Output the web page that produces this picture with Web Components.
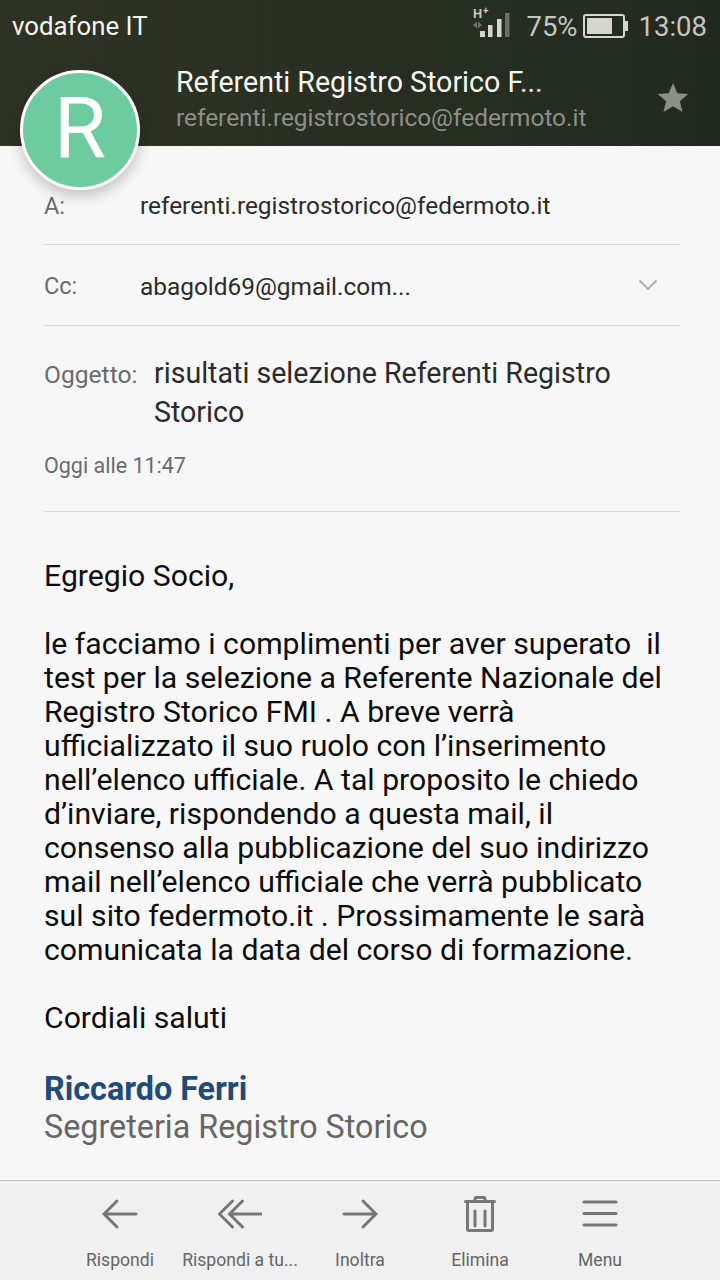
<!DOCTYPE html>
<html lang="it">
<head>
<meta charset="utf-8">
<title>Email</title>
<style>
  html, body { margin: 0; padding: 0; }
  body {
    width: 720px;
    height: 1280px;
    overflow: hidden;
    background: #f7f7f7;
    font-family: Roboto, "Liberation Sans", sans-serif;
    display: flex;
    flex-direction: column;
  }
  mail-action svg.tall { height: 36px; }
</style>
</head>
<body>
<mail-header>
  <span slot="carrier">vodafone IT</span>
  <span slot="title">Referenti Registro Storico F...</span>
  <span slot="address">referenti.registrostorico@federmoto.it</span>
</mail-header>

<mail-details>
  <mail-recipient label="A:">referenti.registrostorico@federmoto.it</mail-recipient>
  <mail-recipient label="Cc:" expandable>abagold69@gmail.com...</mail-recipient>
  <mail-subject date="Oggi alle 11:47">risultati selezione Referenti Registro Storico</mail-subject>
</mail-details>

<mail-body>
  <p>Egregio Socio,</p>
  <p>le facciamo i complimenti per aver superato&nbsp; il<br>test per la selezione a Referente Nazionale del<br>Registro Storico FMI . A breve verrà<br>ufficializzato il suo ruolo con l’inserimento<br>nell’elenco ufficiale. A tal proposito le chiedo<br>d’inviare, rispondendo a questa mail, il<br>consenso alla pubblicazione del suo indirizzo<br>mail nell’elenco ufficiale che verrà pubblicato<br>sul sito federmoto.it . Prossimamente le sarà<br>comunicata la data del corso di formazione.</p>
  <p>Cordiali saluti</p>
  <mail-signature name="Riccardo Ferri">Segreteria Registro Storico</mail-signature>
</mail-body>

<mail-toolbar>
  <mail-action label="Rispondi">
    <svg viewBox="0 0 36 32"><path d="M34 16H2M15 3 2 16l13 13"/></svg>
  </mail-action>
  <mail-action label="Rispondi a tu...">
    <svg viewBox="0 0 44 32"><path d="M43 16H11.500M24.500 3 11.500 16l13 13M14.500 3 1.500 16l13 13"/></svg>
  </mail-action>
  <mail-action label="Inoltra">
    <svg viewBox="0 0 36 32"><path d="M2 16h32M21 3l13 13-13 13"/></svg>
  </mail-action>
  <mail-action label="Elimina">
    <svg class="tall" viewBox="0 0 36 36"><path d="M3.500 5.500h29M5.500 6v27A1.500 1.500 0 0 0 7 34.500h22a1.500 1.500 0 0 0 1.500-1.500V6M13 5V2.500a1 1 0 0 1 1-1h8a1 1 0 0 1 1 1V5M13 15v15M23 15v15"/></svg>
  </mail-action>
  <mail-action label="Menu">
    <svg viewBox="0 0 36 32"><path d="M2 4h32M2 15.500h32M2 27h32"/></svg>
  </mail-action>
</mail-toolbar>

<script>
class MailHeader extends HTMLElement {
  constructor() {
    super();
    this.attachShadow({ mode: "open" });
  }

  connectedCallback() {
    this.shadowRoot.innerHTML = /* html */ `
      <style>
        :host {
          display: block;
          position: relative;
          height: 146px;
          flex: none;
          background: linear-gradient(90deg, #2e3324, #222a20);
          color: #fff;
          z-index: 2;
        }
        .status {
          height: 52px;
          padding: 0 13px 0 12px;
          display: flex;
          align-items: center;
          font-size: 25.800px;
          color: #f4f4f0;
        }
        .status .carrier { flex: 1; }
        .status .right {
          display: flex;
          align-items: center;
          color: #c4c7bf;
          font-size: 27.500px;
        }
        .signal { width: 38px; height: 36px; margin-right: 15px; margin-top: -12px; }
        .battery { width: 46px; height: 24px; margin: 0 10px 0 5px; }
        .info {
          display: flex;
          align-items: flex-start;
          padding-left: 176px;
          padding-right: 30px;
        }
        .names { flex: 1; }
        .title { font-size: 28.600px; line-height: 32px; margin-top: 14px; color: #f6f6f2; }
        .address { font-size: 24.400px; line-height: 32px; margin-top: 4px; color: #8c9087; }
        .star { width: 32px; height: 30px; margin-top: 30px; margin-right: 1px; }
        .avatar {
          position: absolute;
          left: 20px;
          top: 70px;
          width: 120px;
          height: 120px;
          box-sizing: border-box;
          border: 3px solid #fff;
          border-radius: 50%;
          background: #6ccb9f;
          box-shadow: 0 6px 14px rgba(0, 0, 0, .22);
          display: flex;
          align-items: center;
          justify-content: center;
          padding-bottom: 3px;
          font-size: 85px;
          color: #fff;
        }
      </style>
      <div class="status">
        <div class="carrier"><slot name="carrier"></slot></div>
        <div class="right">
          <svg class="signal" viewBox="0 -6 38 36">
            <text x="0" y="10" font-size="13" font-weight="700" font-family="Roboto" fill="#c4c7bf">H</text>
            <text x="10" y="6" font-size="10" font-weight="700" font-family="Roboto" fill="#c4c7bf">+</text>
            <path d="M0 17l4-3.500v7zM5 13.500l4 3.500-4 3.500z" fill="#6f7368"/>
            <rect x="7" y="23" width="5" height="6" fill="#d4d6cf"/>
            <rect x="15" y="17" width="4.500" height="12" fill="#d4d6cf"/>
            <rect x="24" y="11" width="4.500" height="18" fill="#d4d6cf"/>
            <rect x="32" y="5" width="4.500" height="24" fill="#6c7066"/>
          </svg>
          <span>75%</span>
          <svg class="battery" viewBox="0 0 46 24">
            <rect x="1" y="1" width="40" height="22" rx="2" fill="none" stroke="#d4d6cf" stroke-width="2"/>
            <rect x="4" y="4" width="25" height="16" fill="#d4d6cf"/>
            <rect x="42" y="7" width="3" height="10" fill="#d4d6cf"/>
          </svg>
          <span>13:08</span>
        </div>
      </div>
      <div class="info">
        <div class="names">
          <div class="title"><slot name="title"></slot></div>
          <div class="address"><slot name="address"></slot></div>
        </div>
        <svg class="star" viewBox="0 0 32 30"><path d="M16 1l4.300 10.200 11 .9-8.400 7.200 2.600 10.700L16 24.300 6.500 30l2.600-10.700L.7 12.100l11-.9z" fill="#8b9086"/></svg>
      </div>
      <div class="avatar">R</div>
    `;
  }
}

class MailDetails extends HTMLElement {
  constructor() {
    super();
    this.attachShadow({ mode: "open" });
  }

  connectedCallback() {
    this.shadowRoot.innerHTML = /* html */ `
      <style>
        :host {
          display: block;
          flex: none;
          margin: 0 40px 0 44px;
        }
      </style>
      <slot></slot>
    `;
  }
}

class MailRecipient extends HTMLElement {
  constructor() {
    super();
    this.attachShadow({ mode: "open" });
  }

  connectedCallback() {
    const chevron = this.hasAttribute("expandable")
      ? `<svg class="chevron" viewBox="0 0 20 12"><path d="M1.500 1.500 10 10l8.500-8.500"/></svg>`
      : "";
    this.shadowRoot.innerHTML = /* html */ `
      <style>
        :host {
          display: flex;
          align-items: center;
          height: 80px;
          border-bottom: 1px solid #dcdcdc;
          font-size: 24.400px;
        }
        :host(:first-child) { height: 98px; }
        :host(:first-child) .row { padding-top: 21px; }
        .row { display: flex; align-items: center; width: 100%; padding-top: 2px; }
        .label { width: 96px; color: #6b6b6b; font-size: 23.500px; }
        .value { flex: 1; color: #2b2b2b; }
        .chevron {
          width: 20px;
          height: 12px;
          margin-right: 22px;
          margin-top: -2px;
          fill: none;
          stroke: #b0b0b0;
          stroke-width: 2;
        }
      </style>
      <div class="row">
        <div class="label">${this.getAttribute("label")}</div>
        <div class="value"><slot></slot></div>
        ${chevron}
      </div>
    `;
  }
}

class MailSubject extends HTMLElement {
  constructor() {
    super();
    this.attachShadow({ mode: "open" });
  }

  connectedCallback() {
    this.shadowRoot.innerHTML = /* html */ `
      <style>
        :host {
          display: block;
          height: 186px;
          box-sizing: border-box;
          padding-top: 28px;
          border-bottom: 1px solid #dcdcdc;
        }
        .row { display: flex; align-items: flex-start; }
        .label { width: 110px; color: #6b6b6b; font-size: 24.600px; line-height: 42px; }
        .value { flex: 1; color: #2b2b2b; font-size: 28.600px; line-height: 39px; padding-right: 40px; }
        .date { margin-top: 20px; color: #6b6b6b; font-size: 21.500px; line-height: 28px; }
      </style>
      <div class="row">
        <div class="label">Oggetto:</div>
        <div class="value"><slot></slot></div>
      </div>
      <div class="date">${this.getAttribute("date")}</div>
    `;
  }
}

class MailBody extends HTMLElement {
  constructor() {
    super();
    this.attachShadow({ mode: "open" });
  }

  connectedCallback() {
    this.shadowRoot.innerHTML = /* html */ `
      <style>
        :host {
          display: block;
          flex: 1;
          min-height: 0;
          padding: 47px 0 0 44px;
          color: #0c0c0c;
          font-size: 30.200px;
          line-height: 34px;
        }
        ::slotted(p) { margin: 0 0 34px; }
      </style>
      <slot></slot>
    `;
  }
}

class MailSignature extends HTMLElement {
  constructor() {
    super();
    this.attachShadow({ mode: "open" });
  }

  connectedCallback() {
    this.shadowRoot.innerHTML = /* html */ `
      <style>
        :host { display: block; font-size: 32.300px; line-height: 38px; padding-top: 1px; }
        .name { color: #1f4a7c; font-weight: 700; }
        .role { color: #666; }
      </style>
      <div class="name">${this.getAttribute("name")}</div>
      <div class="role"><slot></slot></div>
    `;
  }
}

class MailToolbar extends HTMLElement {
  constructor() {
    super();
    this.attachShadow({ mode: "open" });
  }

  connectedCallback() {
    this.shadowRoot.innerHTML = /* html */ `
      <style>
        :host {
          display: flex;
          flex: none;
          justify-content: center;
          height: 99px;
          background: #f0f0f0;
          border-top: 1px solid #c4c4c4;
        }
      </style>
      <slot></slot>
    `;
  }
}

class MailAction extends HTMLElement {
  constructor() {
    super();
    this.attachShadow({ mode: "open" });
  }

  connectedCallback() {
    this.shadowRoot.innerHTML = /* html */ `
      <style>
        :host {
          display: flex;
          flex-direction: column;
          align-items: center;
          width: 120px;
          padding-top: 15px;
          color: #666;
        }
        .icon { height: 36px; display: flex; align-items: center; }
        ::slotted(svg) {
          height: 32px;
          fill: none;
          stroke: #777;
          stroke-width: 3;
          stroke-linecap: round;
        }
        .label { margin-top: 16px; font-size: 17.600px; line-height: 24px; white-space: nowrap; }
      </style>
      <div class="icon"><slot></slot></div>
      <div class="label">${this.getAttribute("label")}</div>
    `;
  }
}

customElements.define("mail-header", MailHeader);
customElements.define("mail-details", MailDetails);
customElements.define("mail-recipient", MailRecipient);
customElements.define("mail-subject", MailSubject);
customElements.define("mail-body", MailBody);
customElements.define("mail-signature", MailSignature);
customElements.define("mail-toolbar", MailToolbar);
customElements.define("mail-action", MailAction);
</script>
</body>
</html>
